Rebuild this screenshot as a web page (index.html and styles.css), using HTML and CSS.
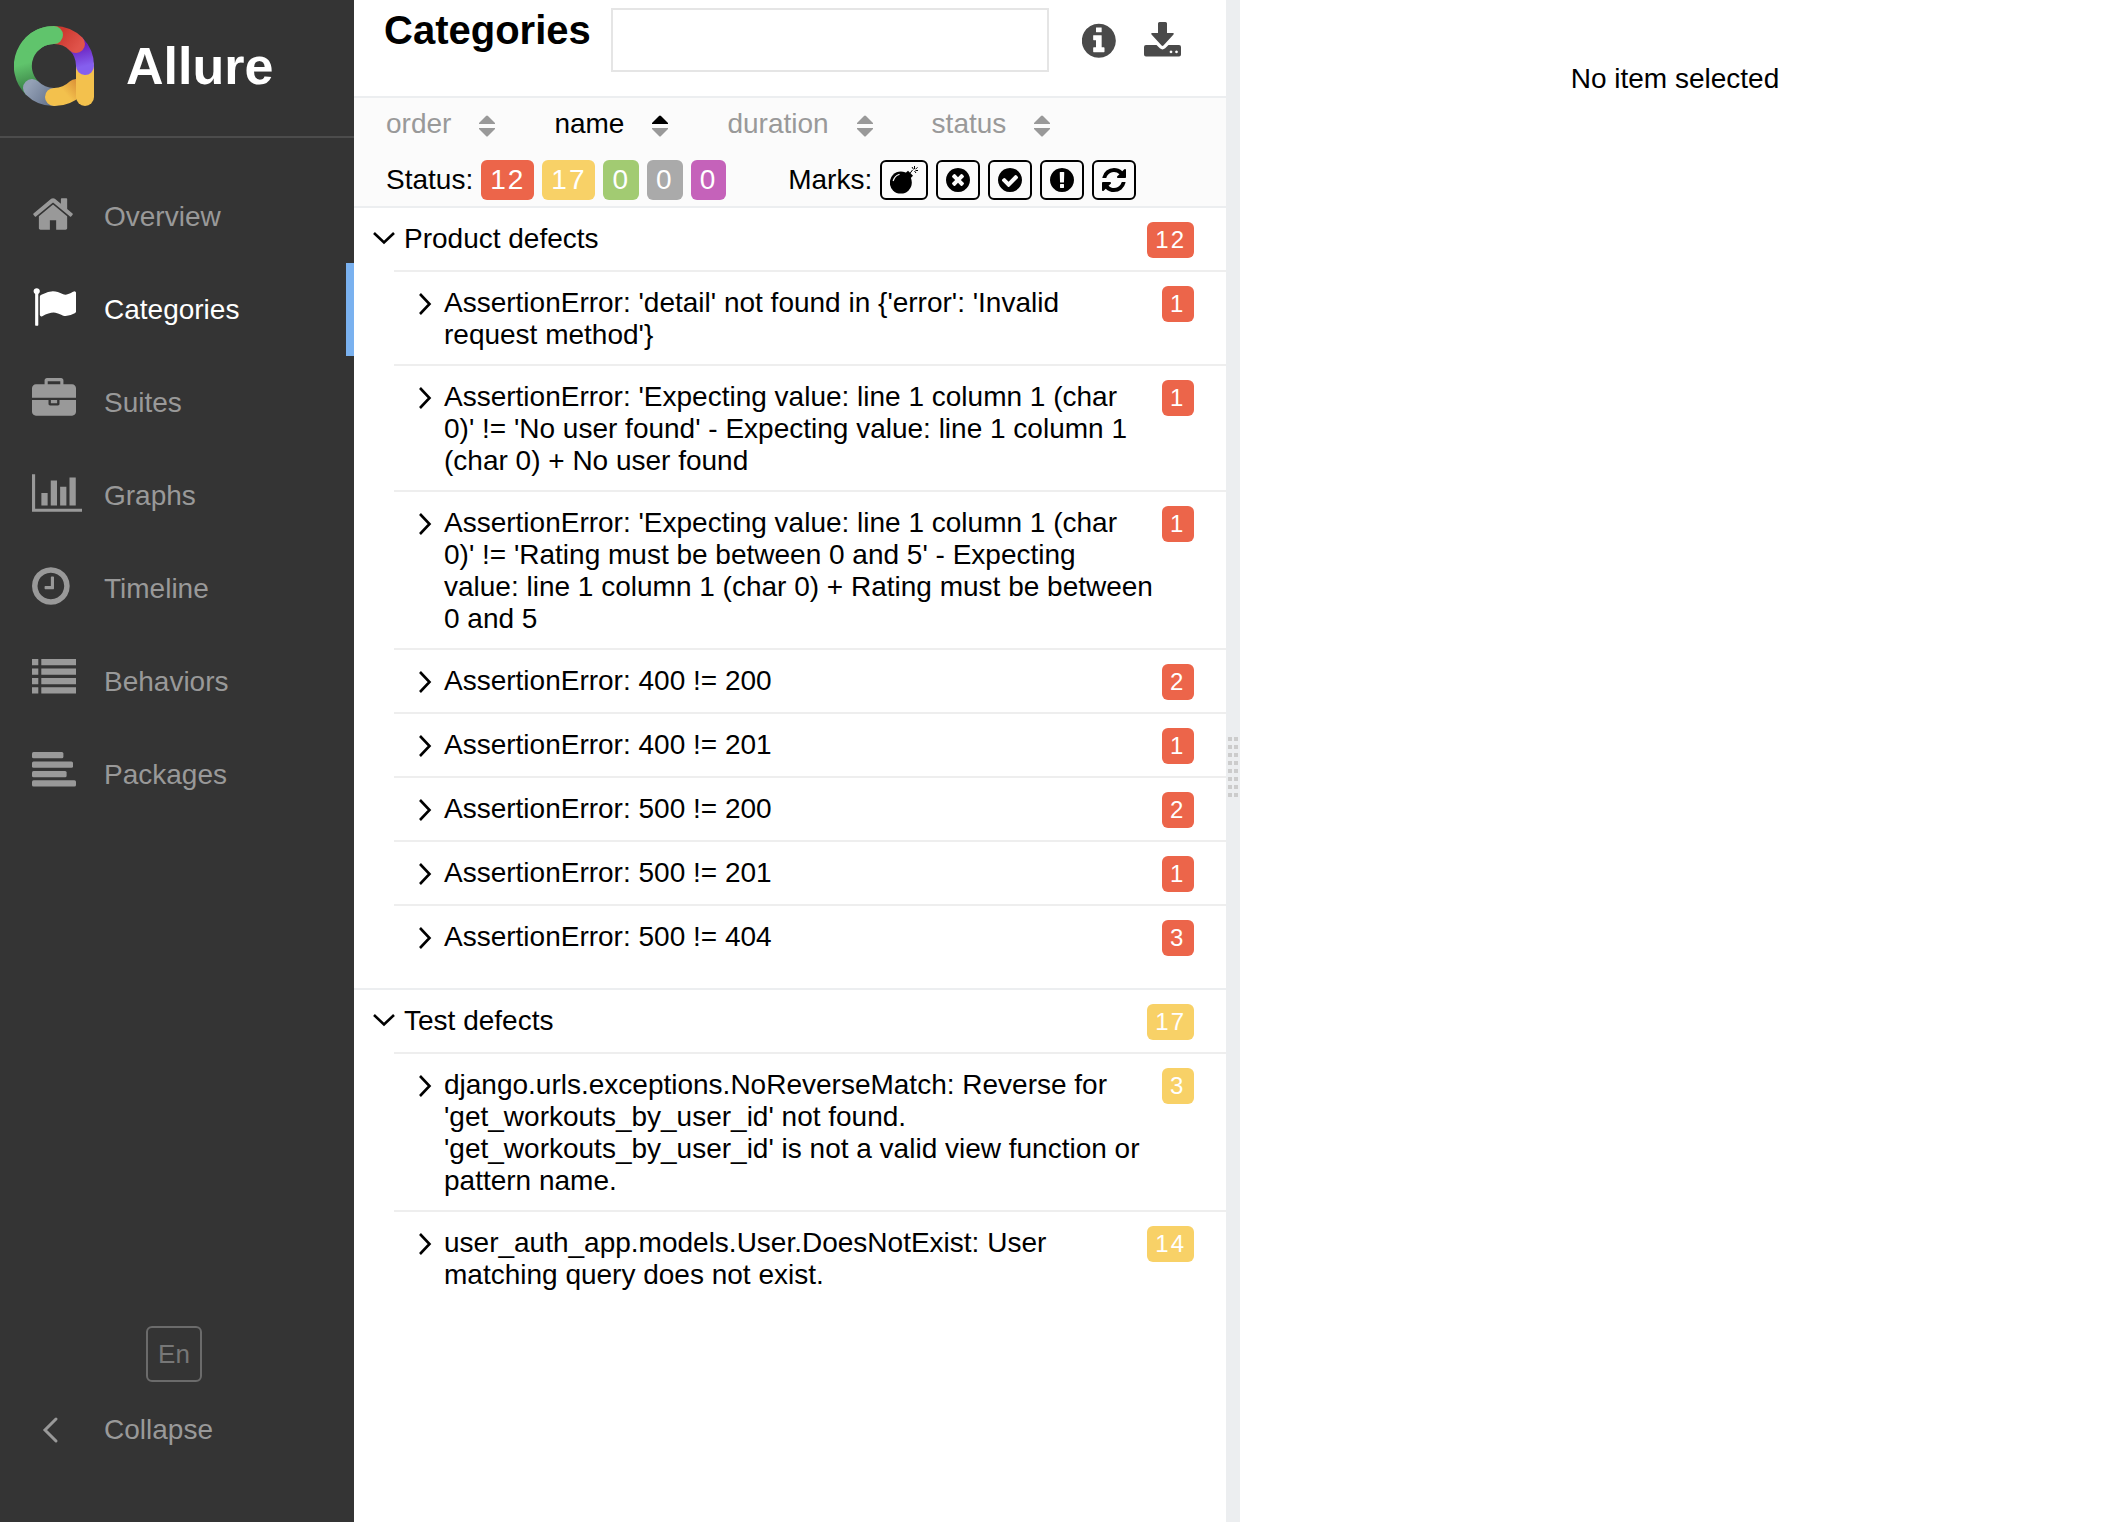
FILE: index.html
```html
<!DOCTYPE html>
<html lang="en">
<head>
<meta charset="utf-8">
<title>Allure Report - Categories</title>
<link rel="stylesheet" href="styles.css">
</head>
<body>
<svg class="sprite" width="0" height="0" aria-hidden="true">
  <symbol id="chevron-right" viewBox="0 0 14 22"><path d="M2 1l9.500 10L2 21" fill="none" stroke="currentColor" stroke-width="2.600"/></symbol>
  <symbol id="chevron-down" viewBox="0 0 22 14"><path d="M1 2l10 9.500L21 2" fill="none" stroke="currentColor" stroke-width="2.600"/></symbol>
  <symbol id="sort" viewBox="0 0 16 22"><path class="sort-up" d="M0 9v-1l7-7q1-1 2 0l7 7v1z"/><path class="sort-down" d="M0 13v1l7 7q1 1 2 0l7-7v-1z"/></symbol>
</svg>
<div class="app">
  <aside class="side">
    <a class="brand" href="#">
      <svg class="logo" width="80" height="80" viewBox="0 0 80 80" stroke-width="18" stroke-linecap="round" aria-hidden="true">
        <defs>
          <linearGradient id="g-green" gradientUnits="userSpaceOnUse" x1="9" y1="38" x2="16" y2="62"><stop offset="0" stop-color="#60c46c"/><stop offset="1" stop-color="#3c8448"/></linearGradient>
          <linearGradient id="g-gray" gradientUnits="userSpaceOnUse" x1="16" y1="58" x2="38" y2="74"><stop offset="0" stop-color="#94a1b6"/><stop offset="1" stop-color="#68768f"/></linearGradient>
          <linearGradient id="g-yellow" gradientUnits="userSpaceOnUse" x1="52" y1="68" x2="66" y2="56"><stop offset="0" stop-color="#f3c14d"/><stop offset="1" stop-color="#d98d35"/></linearGradient>
          <linearGradient id="g-purple" gradientUnits="userSpaceOnUse" x1="66" y1="20" x2="71" y2="40"><stop offset="0" stop-color="#6a20bf"/><stop offset="1" stop-color="#855fee"/></linearGradient>
          <linearGradient id="g-red" gradientUnits="userSpaceOnUse" x1="46" y1="8" x2="64" y2="22"><stop offset="0" stop-color="#cd3930"/><stop offset="1" stop-color="#e0544b"/></linearGradient>
        </defs>
        <path stroke="url(#g-green)" d="M18 62A31 31 0 0 1 40 9"/>
        <path stroke="url(#g-gray)" d="M40 71A31 31 0 0 1 18 62"/>
        <path stroke="url(#g-yellow)" d="M62 62A31 31 0 0 1 40 71"/>
        <path stroke="#f3c14d" d="M71 40V71"/>
        <path stroke="url(#g-purple)" d="M62 18A31 31 0 0 1 71 40"/>
        <path stroke="url(#g-red)" d="M40 9A31 31 0 0 1 62 18"/>
        <path stroke="#60c46c" d="M18 18A31 31 0 0 1 40 9"/>
      </svg>
      <span class="brand-name">Allure</span>
    </a>
    <nav class="menu">
      <a class="item" href="#"><svg class="icon" width="44" height="44" viewBox="40 0 1792 1792"><path d="M1472 992v480q0 26-19 45t-45 19h-384v-384h-256v384h-384q-26 0-45-19t-19-45v-480q0-1 .5-3t.5-3l575-474 575 474q1 2 1 6zm223-69l-62 74q-8 9-21 11h-3q-13 0-21-7l-692-577-692 577q-12 8-24 7-13-2-21-11l-62-74q-8-10-7-23.500t11-21.500l719-599q32-26 76-26t76 26l244 204v-195q0-14 9-23t23-9h192q14 0 23 9t9 23v408l219 182q10 8 11 21.500t-7 23.500z"/></svg>Overview</a>
      <a class="item active" href="#" aria-current="page"><svg class="icon" width="44" height="44" viewBox="0 0 1792 1792"><path d="M320 256q0 72-64 110v1266q0 13-9.500 22.500t-22.500 9.500h-64q-13 0-22.500-9.500t-9.500-22.500v-1266q-64-38-64-110 0-53 37.500-90.500t90.500-37.500 90.500 37.500 37.500 90.500zm1472 64v763q0 25-12.500 38.500t-39.500 27.500q-215 116-369 116-61 0-123.500-22t-108.500-48-115.500-48-142.500-22q-192 0-464 146-17 9-33 9-26 0-45-19t-19-45v-742q0-32 31-55 21-14 79-43 236-120 421-120 107 0 200 29t219 88q38 19 88 19 54 0 117.500-21t110-47 88-47 54.500-21q26 0 45 19t19 45z"/></svg>Categories</a>
      <a class="item" href="#"><svg class="icon" width="44" height="44" viewBox="0 0 1792 1792"><path d="M640 256h512v-128h-512v128zm1152 640v480q0 66-47 113t-113 47h-1472q-66 0-113-47t-47-113v-480h672v160q0 26 19 45t45 19h320q26 0 45-19t19-45v-160h672zm-768 0v128h-256v-128h256zm768-480v384h-1792v-384q0-66 47-113t113-47h352v-160q0-40 28-68t68-28h576q40 0 68 28t28 68v160h352q66 0 113 47t47 113z"/></svg>Suites</a>
      <a class="item" href="#"><svg class="icon" width="50" height="44" viewBox="0 0 2048 1792"><path d="M640 896v512h-256v-512h256zm384-512v1024h-256v-1024h256zm1024 1152v128h-2048v-1536h128v1408h1920zm-640-896v768h-256v-768h256zm384-384v1152h-256v-1152h256z"/></svg>Graphs</a>
      <a class="item" href="#"><svg class="icon" width="44" height="44" viewBox="128 0 1792 1792"><path d="M1024 544v448q0 14-9 23t-23 9h-320q-14 0-23-9t-9-23v-64q0-14 9-23t23-9h224v-352q0-14 9-23t23-9h64q14 0 23 9t9 23zm416 352q0-148-73-273t-198-198-273-73-273 73-198 198-73 273 73 273 198 198 273 73 273-73 198-198 73-273zm224 0q0 209-103 385.500t-279.500 279.500-385.500 103-385.500-103-279.500-279.500-103-385.500 103-385.500 279.500-279.500 385.500-103 385.500 103 279.500 279.500 103 385.500z"/></svg>Timeline</a>
      <a class="item" href="#"><svg class="icon" width="44" height="44" viewBox="0 0 44 44"><path d="M0 2h6.300v6.300H0zM9.300 2H44v6.300H9.300zM0 11.500h6.300v6.300H0zM9.300 11.500H44v6.300H9.300zM0 20.900h6.300v6.300H0zM9.300 20.900H44v6.300H9.300zM0 30.300h6.300v6.300H0zM9.300 30.300H44v6.300H9.300z"/></svg>Behaviors</a>
      <a class="item" href="#"><svg class="icon" width="44" height="44" viewBox="0 0 44 44"><rect y="2" width="31.400" height="6.300" rx="1.500"/><rect y="11.500" width="41" height="6.300" rx="1.500"/><rect y="20.900" width="34.600" height="6.300" rx="1.500"/><rect y="30.300" width="44" height="6.300" rx="1.500"/></svg>Packages</a>
    </nav>
    <div class="side-foot">
      <button class="lang" type="button">En</button>
      <button class="item collapse" type="button"><svg class="icon" width="44" height="44" viewBox="0 0 44 44"><path d="M24 11L13 22l11 11" fill="none" stroke="currentColor" stroke-width="3" stroke-linecap="round"/></svg>Collapse</button>
    </div>
  </aside>

  <main class="pane">
    <header class="head">
      <h1 class="title">Categories</h1>
      <input class="search" type="text" aria-label="Search categories">
      <div class="tools">
        <button class="tool" type="button" aria-label="Info"><svg width="34" height="36" viewBox="0 0 34 36"><g transform="translate(-3 -1) scale(.02214)"><path d="M1152 1376v-160q0-14-9-23t-23-9h-96v-512q0-14-9-23t-23-9h-320q-14 0-23 9t-9 23v160q0 14 9 23t23 9h96v320h-96q-14 0-23 9t-9 23v160q0 14 9 23t23 9h448q14 0 23-9t9-23zm-128-896v-160q0-14-9-23t-23-9h-192q-14 0-23 9t-9 23v160q0 14 9 23t23 9h192q14 0 23-9t9-23zm640 416q0 209-103 385.500t-279.500 279.500-385.500 103-385.500-103-279.500-279.500-103-385.500 103-385.500 279.500-279.500 385.500-103 385.500 103 279.500 279.500 103 385.500z"/></g></svg></button>
        <button class="tool" type="button" aria-label="Download"><svg width="37" height="36" viewBox="0 0 37 36"><path d="M15.500 0h6q1.500 0 1.500 1.500V11h6q1.500 0 .5 1.500L19.400 23.500q-.9.800-1.800 0L7.500 12.500q-1-1.500.5-1.500h6V1.500Q14 0 15.500 0z"/><path fill-rule="evenodd" d="M2 23h10.500l3.300 3.300q2.700 2.200 5.400 0L24.500 23H35q2 0 2 2v7.500q0 2-2 2H2q-2 0-2-2V25q0-2 2-2zM27 28.500a1.400 1.400 0 1 0 .01 0zM32.500 28.500a1.400 1.400 0 1 0 .01 0z"/></svg></button>
      </div>
    </header>

    <section class="controls">
      <div class="sorts">
        <button class="sort" type="button">order<svg width="16" height="22"><use href="#sort"/></svg></button>
        <button class="sort asc" type="button">name<svg width="16" height="22"><use href="#sort"/></svg></button>
        <button class="sort" type="button">duration<svg width="16" height="22"><use href="#sort"/></svg></button>
        <button class="sort" type="button">status<svg width="16" height="22"><use href="#sort"/></svg></button>
      </div>
      <div class="filters">
        <div class="filter">
          <span>Status:</span>
          <button class="badge large failed" type="button">12</button>
          <button class="badge large broken" type="button">17</button>
          <button class="badge large passed" type="button">0</button>
          <button class="badge large skipped" type="button">0</button>
          <button class="badge large unknown" type="button">0</button>
        </div>
        <div class="filter">
          <span>Marks:</span>
          <button class="mark" type="button" aria-label="Flaky"><svg width="28" height="28" viewBox="0 0 28 28"><circle cx="10.800" cy="16.600" r="11"/><path d="M15 7.500l3-2.700 5 5-3 3z"/><path d="M3.300 14.500q1.400-4.500 5.700-6" fill="none" stroke="#fbfbfb" stroke-width="1.300" stroke-linecap="round"/><path d="M19.500 8l3-4M23.600 3.500L22 1M24.500 3V0M25.500 3.300l2-2M25.500 4.500h2.500M24.500 5l1.500 2" fill="none" stroke="#000" stroke-width="1"/></svg></button>
          <button class="mark" type="button" aria-label="New failed"><svg width="24" height="24" viewBox="128 128 1536 1536"><path d="M1277 1122q0-26-19-45l-181-181 181-181q19-19 19-45 0-27-19-46l-90-90q-19-19-46-19-26 0-45 19l-181 181-181-181q-19-19-45-19-27 0-46 19l-90 90q-19 19-19 46 0 26 19 45l181 181-181 181q-19 19-19 45 0 27 19 46l90 90q19 19 46 19 26 0 45-19l181-181 181 181q19 19 45 19 27 0 46-19l90-90q19-19 19-46zm387-226q0 209-103 385.500t-279.500 279.500-385.500 103-385.500-103-279.500-279.500-103-385.500 103-385.500 279.500-279.500 385.500-103 385.500 103 279.500 279.500 103 385.500z"/></svg></button>
          <button class="mark" type="button" aria-label="New passed"><svg width="24" height="24" viewBox="128 128 1536 1536"><path d="M1412 734q0-28-18-46l-91-90q-19-19-45-19t-45 19l-408 407-226-226q-19-19-45-19t-45 19l-91 90q-18 18-18 46 0 27 18 45l362 362q19 19 45 19 27 0 46-19l543-543q18-18 18-45zm252 162q0 209-103 385.500t-279.500 279.500-385.500 103-385.500-103-279.500-279.500-103-385.500 103-385.500 279.500-279.500 385.500-103 385.500 103 279.500 279.500 103 385.500z"/></svg></button>
          <button class="mark" type="button" aria-label="New broken"><svg width="24" height="24" viewBox="128 128 1536 1536"><path d="M896 128q209 0 385.500 103t279.500 279.500 103 385.500-103 385.500-279.500 279.500-385.500 103-385.500-103-279.500-279.500-103-385.500 103-385.500 279.500-279.500 385.500-103zm128 1247v-190q0-14-9-23.500t-22-9.500h-192q-13 0-23 10t-10 23v190q0 13 10 23t23 10h192q13 0 22-9.500t9-23.500zm-2-344l18-621q0-12-10-18-10-8-24-8h-220q-14 0-24 8-10 6-10 18l17 621q0 10 10 17.500t24 7.500h185q14 0 23.500-7.500t10.500-17.500z"/></svg></button>
          <button class="mark" type="button" aria-label="Retries"><svg width="24" height="24" viewBox="128 128 1536 1536"><path d="M1639 1056q0 5-1 7-64 268-268 434.500t-478 166.500q-146 0-282.500-55t-243.500-157l-129 129q-19 19-45 19t-45-19-19-45v-448q0-26 19-45t45-19h448q26 0 45 19t19 45-19 45l-137 137q71 66 161 102t187 36q134 0 250-65t186-179q11-17 53-117 8-23 30-23h192q13 0 22.500 9.500t9.500 22.500zm25-800v448q0 26-19 45t-45 19h-448q-26 0-45-19t-19-45 19-45l138-138q-148-137-349-137-134 0-250 65t-186 179q-11 17-53 117-8 23-30 23h-199q-13 0-22.500-9.500t-9.500-22.500v-7q65-268 270-434.500t480-166.500q146 0 284 55.500t245 156.500l130-129q19-19 45-19t45 19 19 45z"/></svg></button>
        </div>
      </div>
    </section>

    <ul class="tree">
      <li class="group">
        <button class="row" type="button"><svg class="chev" width="22" height="14"><use href="#chevron-down"/></svg><span class="name">Product defects</span><span class="badge failed">12</span></button>
        <ul class="children">
          <li><button class="row" type="button"><svg class="chev" width="14" height="22"><use href="#chevron-right"/></svg><span class="name">AssertionError: 'detail' not found in {'error': 'Invalid request method'}</span><span class="badge failed">1</span></button></li>
          <li><button class="row" type="button"><svg class="chev" width="14" height="22"><use href="#chevron-right"/></svg><span class="name">AssertionError: 'Expecting value: line 1 column 1 (char 0)' != 'No user found' - Expecting value: line 1 column 1 (char 0) + No user found</span><span class="badge failed">1</span></button></li>
          <li><button class="row" type="button"><svg class="chev" width="14" height="22"><use href="#chevron-right"/></svg><span class="name">AssertionError: 'Expecting value: line 1 column 1 (char 0)' != 'Rating must be between 0 and 5' - Expecting value: line 1 column 1 (char 0) + Rating must be between 0 and 5</span><span class="badge failed">1</span></button></li>
          <li><button class="row" type="button"><svg class="chev" width="14" height="22"><use href="#chevron-right"/></svg><span class="name">AssertionError: 400 != 200</span><span class="badge failed">2</span></button></li>
          <li><button class="row" type="button"><svg class="chev" width="14" height="22"><use href="#chevron-right"/></svg><span class="name">AssertionError: 400 != 201</span><span class="badge failed">1</span></button></li>
          <li><button class="row" type="button"><svg class="chev" width="14" height="22"><use href="#chevron-right"/></svg><span class="name">AssertionError: 500 != 200</span><span class="badge failed">2</span></button></li>
          <li><button class="row" type="button"><svg class="chev" width="14" height="22"><use href="#chevron-right"/></svg><span class="name">AssertionError: 500 != 201</span><span class="badge failed">1</span></button></li>
          <li><button class="row" type="button"><svg class="chev" width="14" height="22"><use href="#chevron-right"/></svg><span class="name">AssertionError: 500 != 404</span><span class="badge failed">3</span></button></li>
        </ul>
      </li>
      <li class="group">
        <button class="row" type="button"><svg class="chev" width="22" height="14"><use href="#chevron-down"/></svg><span class="name">Test defects</span><span class="badge broken">17</span></button>
        <ul class="children">
          <li><button class="row" type="button"><svg class="chev" width="14" height="22"><use href="#chevron-right"/></svg><span class="name">django.urls.exceptions.NoReverseMatch: Reverse for 'get_workouts_by_user_id' not found. 'get_workouts_by_user_id' is not a valid view function or pattern name.</span><span class="badge broken">3</span></button></li>
          <li><button class="row" type="button"><svg class="chev" width="14" height="22"><use href="#chevron-right"/></svg><span class="name">user_auth_app.models.User.DoesNotExist: User matching query does not exist.</span><span class="badge broken">14</span></button></li>
        </ul>
      </li>
    </ul>
  </main>

  <div class="gutter" role="separator" aria-orientation="vertical"><span class="grip"></span></div>

  <section class="detail">No item selected</section>
</div>
</body>
</html>
```
FILE: styles.css
```css
* {
  box-sizing: border-box;
}

body {
  margin: 0;
  background: #fff;
  color: #000;
  font: 28px/32px "Liberation Sans", Arial, Helvetica, sans-serif;
}

button {
  margin: 0;
  padding: 0;
  border: 0;
  background: none;
  color: inherit;
  font: inherit;
  text-align: left;
  cursor: pointer;
}

a {
  color: inherit;
  text-decoration: none;
}

ul {
  margin: 0;
  padding: 0;
  list-style: none;
}

svg {
  display: block;
  flex: none;
  fill: currentColor;
}

.sprite {
  position: absolute;
}

.app {
  display: flex;
  min-height: 100vh;
}

/* Sidebar */

.side {
  display: flex;
  flex: none;
  flex-direction: column;
  width: 354px;
  background: #343434;
  color: #999;
}

.brand {
  display: flex;
  align-items: center;
  gap: 32px;
  padding: 26px 14px 30px;
  border-bottom: 2px solid #4c4c4c;
  color: #fff;
}

.logo {
  fill: none;
}

.brand-name {
  font-size: 52px;
  font-weight: bold;
  line-height: 60px;
}

.menu {
  padding-top: 32px;
}

.item {
  display: flex;
  align-items: flex-start;
  width: 100%;
  padding: 31px 0 30px 104px;
  border-right: 8px solid transparent;
}

.item.active {
  border-right-color: #7ab1ef;
  color: #fff;
}

.icon {
  margin: -9px 0 -24px -72px;
}

.icon[width="44"] {
  margin-right: 28px;
}

.icon[width="50"] {
  margin-right: 22px;
}

.side-foot {
  display: flex;
  flex-direction: column;
  align-items: center;
  gap: 2px;
  margin-top: auto;
  padding-bottom: 46px;
}

.lang {
  width: 56px;
  height: 56px;
  margin-right: 6px;
  border: 2px solid #6b6b6b;
  border-radius: 6px;
  color: #777;
  font-size: 26px;
  text-align: center;
}

.collapse {
  padding-top: 30px;
}

.collapse .icon {
  margin-top: -6px;
}

/* List pane */

.pane {
  flex: 1 1 18px;
  min-width: 0;
}

.head {
  display: flex;
  align-items: flex-start;
  gap: 20px;
  padding: 8px 45px 24px 30px;
  border-bottom: 2px solid #eceef0;
}

.title {
  margin: 0;
  font-size: 40px;
  line-height: 44px;
}

.search {
  flex: 1;
  min-width: 0;
  height: 64px;
  padding: 0 16px;
  border: 2px solid #e5e5e5;
  background: #fff;
  font: inherit;
}

.tools {
  display: flex;
  gap: 28px;
  padding: 14px 0 0 13px;
  color: #4a4a4a;
}

.controls {
  padding-bottom: 6px;
  border-bottom: 2px solid #eceef0;
  background: #fbfbfb;
}

.sorts {
  display: flex;
  gap: 59px;
  padding: 10px 32px 20px;
}

.sort {
  display: flex;
  align-items: center;
  gap: 28px;
  height: 32px;
  color: #999;
}

.sort svg {
  margin-top: 4px;
}

.sort.asc {
  color: #000;
}

.sort-down {
  fill: #999;
}

.filters {
  display: flex;
  gap: 62px;
  padding: 0 32px;
}

.filter {
  display: flex;
  align-items: center;
  gap: 8px;
}

.badge {
  flex: none;
  min-width: 32px;
  height: 36px;
  padding: 0 8px;
  border-radius: 6px;
  color: #fff;
  font-size: 24px;
  line-height: 36px;
  letter-spacing: 2px;
}

.badge.large {
  height: 40px;
  padding: 0 9px;
  font-size: 28px;
  line-height: 40px;
}

.failed {
  background: #ec654a;
}

.broken {
  background: #f8d167;
}

.passed {
  background: #a2cb72;
}

.skipped {
  background: #aaa;
}

.unknown {
  background: #c562ba;
}

.mark {
  height: 40px;
  padding: 0 8px;
  border: 2px solid #000;
  border-radius: 6px;
}

.mark svg {
  margin: auto;
}

/* Tree */

.group + .group {
  border-top: 2px solid #eceef0;
}

.row {
  display: flex;
  align-items: flex-start;
  width: 100%;
  padding: 14px 32px 12px 19px;
}

.name {
  flex: 1;
  min-width: 0;
  padding: 1px 8px 1px 9px;
}

.chev {
  margin-top: 9px;
}

.children {
  margin-left: 40px;
  padding-bottom: 20px;
}

.children li {
  border-top: 2px solid #eee;
}

.children .row {
  padding-left: 24px;
}

.children .chev {
  margin-top: 7px;
}

.children .name {
  padding-left: 12px;
}

/* Splitter */

.gutter {
  display: flex;
  flex: none;
  align-items: center;
  justify-content: center;
  width: 14px;
  padding-top: 12px;
  background: #eceef0;
  cursor: col-resize;
}

.grip {
  width: 10px;
  height: 60px;
  background:
    repeating-linear-gradient(transparent 0 4px, #eceef0 4px 8px),
    linear-gradient(90deg, #ccc 4px, transparent 4px 6px, #ccc 6px);
}

/* Detail pane */

.detail {
  flex: 1 1 0;
  min-width: 0;
  padding: 63px 0 0 8px;
  text-align: center;
}
```
